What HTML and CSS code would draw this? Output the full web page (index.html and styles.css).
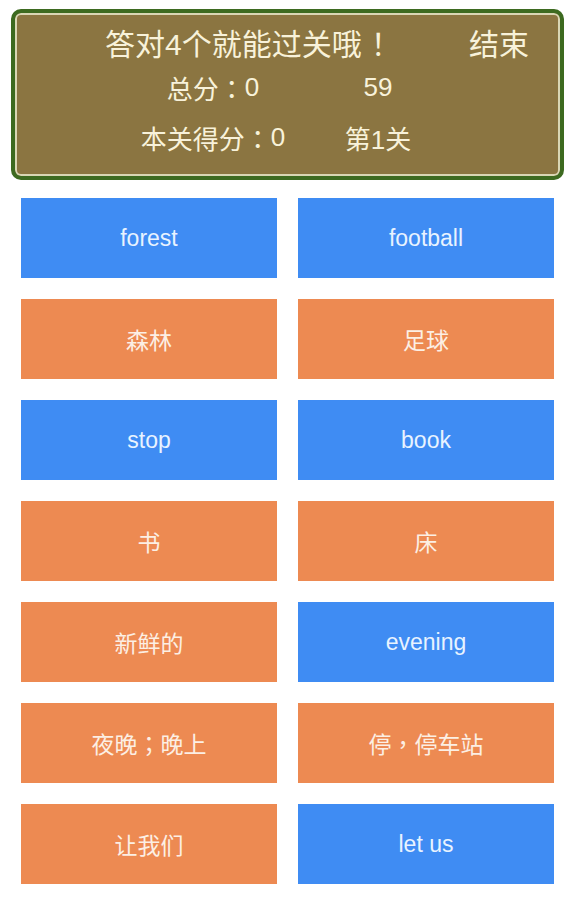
FILE: index.html
```html
<!DOCTYPE html>
<html lang="zh-CN">
<head>
<meta charset="utf-8">
<title>单词配对</title>
<link rel="stylesheet" href="styles.css">
</head>
<body>
<div class="page">
  <header class="board">
    <div class="title-row">
      <span class="title">答对4个就能过关哦<span class="bang">！</span></span>
      <span class="end">结束</span>
    </div>
    <div class="stats">
      <span class="stat">总分<span class="p">：</span>0</span>
      <span class="stat">59</span>
      <span class="stat">本关得分<span class="p">：</span>0</span>
      <span class="stat">第1关</span>
    </div>
  </header>
  <main class="cards">
    <div class="card blue">forest</div>
    <div class="card blue">football</div>
    <div class="card orange">森林</div>
    <div class="card orange">足球</div>
    <div class="card blue">stop</div>
    <div class="card blue">book</div>
    <div class="card orange">书</div>
    <div class="card orange">床</div>
    <div class="card orange">新鲜的</div>
    <div class="card blue">evening</div>
    <div class="card orange">夜晚<span class="p">；</span>晚上</div>
    <div class="card orange">停<span class="p">，</span>停车站</div>
    <div class="card orange">让我们</div>
    <div class="card blue">let us</div>
  </main>
</div>
</body>
</html>
```
FILE: styles.css
```css
html, body {
  margin: 0;
  padding: 0;
  background: #ffffff;
}

body {
  font-family: "Liberation Sans", "Noto Sans CJK SC", sans-serif;
}

.p {
  font-family: "Noto Sans CJK TC", sans-serif;
}

.bang {
  font-family: "Noto Sans CJK SC", sans-serif;
  padding-left: 9px;
}

.page {
  width: 576px;
  padding-top: 9px;
}

.board {
  box-sizing: border-box;
  margin-left: 11px;
  width: 553px;
  height: 171px;
  border: 4px solid #3d6a20;
  border-radius: 10px;
  background: #8b7541;
  box-shadow: inset 0 0 0 2px #d9d6b4;
  color: #f8f2da;
  padding-top: 9px;
}

.title-row {
  display: flex;
  align-items: center;
  height: 40px;
  padding-left: 90px;
  padding-right: 31px;
  font-size: 30px;
}

.end {
  margin-left: auto;
}

.stats {
  display: grid;
  grid-template-columns: 170px 160px;
  grid-auto-rows: 40px;
  row-gap: 10px;
  margin-left: 113px;
  margin-top: 5px;
  font-size: 26px;
}

.stat {
  display: flex;
  align-items: center;
  justify-content: center;
  white-space: nowrap;
}

.cards {
  display: grid;
  grid-template-columns: 256px 256px;
  grid-auto-rows: 80px;
  column-gap: 21px;
  row-gap: 21px;
  margin: 18px 0 0 21px;
}

.card {
  display: flex;
  align-items: center;
  justify-content: center;
  font-size: 23px;
}

.blue {
  background: #3f8cf3;
  color: #e8f3ff;
}

.orange {
  background: #ed8a52;
  color: #fcefe4;
}
```
